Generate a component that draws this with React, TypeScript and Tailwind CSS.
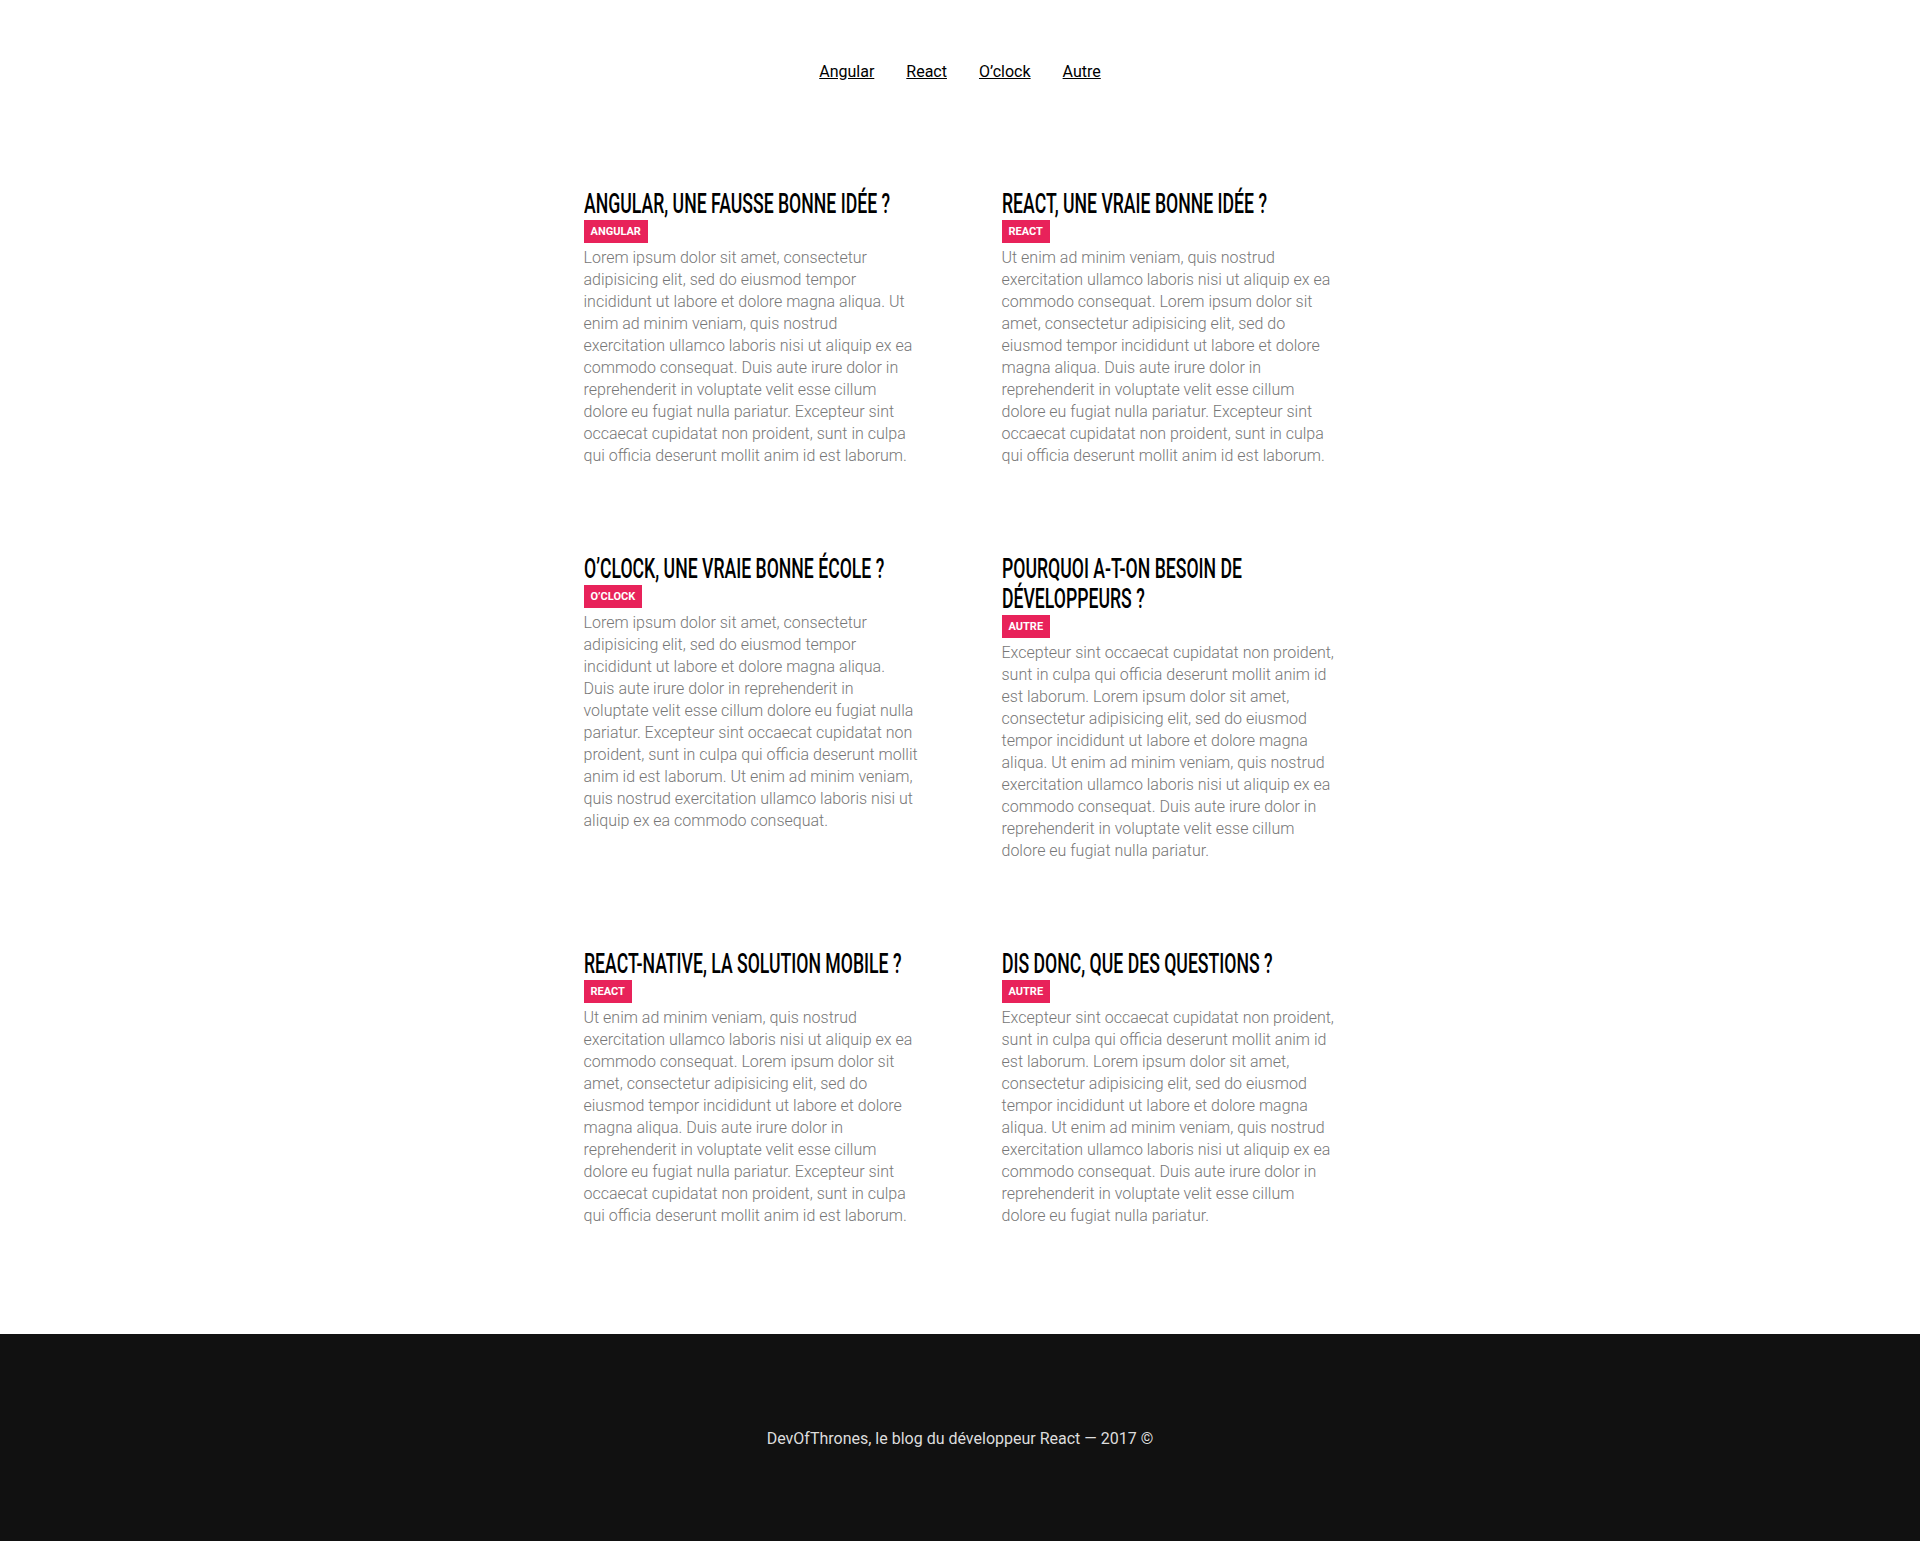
const posts = [
  {
    title: "Angular, une fausse bonne idée ?",
    tag: "Angular",
    text: "Lorem ipsum dolor sit amet, consectetur adipisicing elit, sed do eiusmod tempor incididunt ut labore et dolore magna aliqua. Ut enim ad minim veniam, quis nostrud exercitation ullamco laboris nisi ut aliquip ex ea commodo consequat. Duis aute irure dolor in reprehenderit in voluptate velit esse cillum dolore eu fugiat nulla pariatur. Excepteur sint occaecat cupidatat non proident, sunt in culpa qui officia deserunt mollit anim id est laborum.",
  },
  {
    title: "React, une vraie bonne idée ?",
    tag: "React",
    text: "Ut enim ad minim veniam, quis nostrud exercitation ullamco laboris nisi ut aliquip ex ea commodo consequat. Lorem ipsum dolor sit amet, consectetur adipisicing elit, sed do eiusmod tempor incididunt ut labore et dolore magna aliqua. Duis aute irure dolor in reprehenderit in voluptate velit esse cillum dolore eu fugiat nulla pariatur. Excepteur sint occaecat cupidatat non proident, sunt in culpa qui officia deserunt mollit anim id est laborum.",
  },
  {
    title: "O’clock, une vraie bonne école ?",
    tag: "O’clock",
    text: "Lorem ipsum dolor sit amet, consectetur adipisicing elit, sed do eiusmod tempor incididunt ut labore et dolore magna aliqua. Duis aute irure dolor in reprehenderit in voluptate velit esse cillum dolore eu fugiat nulla pariatur. Excepteur sint occaecat cupidatat non proident, sunt in culpa qui officia deserunt mollit anim id est laborum. Ut enim ad minim veniam, quis nostrud exercitation ullamco laboris nisi ut aliquip ex ea commodo consequat.",
  },
  {
    title: "Pourquoi a-t-on besoin de développeurs ?",
    tag: "Autre",
    text: "Excepteur sint occaecat cupidatat non proident, sunt in culpa qui officia deserunt mollit anim id est laborum. Lorem ipsum dolor sit amet, consectetur adipisicing elit, sed do eiusmod tempor incididunt ut labore et dolore magna aliqua. Ut enim ad minim veniam, quis nostrud exercitation ullamco laboris nisi ut aliquip ex ea commodo consequat. Duis aute irure dolor in reprehenderit in voluptate velit esse cillum dolore eu fugiat nulla pariatur.",
  },
  {
    title: "React-native, la solution mobile ?",
    tag: "React",
    text: "Ut enim ad minim veniam, quis nostrud exercitation ullamco laboris nisi ut aliquip ex ea commodo consequat. Lorem ipsum dolor sit amet, consectetur adipisicing elit, sed do eiusmod tempor incididunt ut labore et dolore magna aliqua. Duis aute irure dolor in reprehenderit in voluptate velit esse cillum dolore eu fugiat nulla pariatur. Excepteur sint occaecat cupidatat non proident, sunt in culpa qui officia deserunt mollit anim id est laborum.",
  },
  {
    title: "Dis donc, que des questions ?",
    tag: "Autre",
    text: "Excepteur sint occaecat cupidatat non proident, sunt in culpa qui officia deserunt mollit anim id est laborum. Lorem ipsum dolor sit amet, consectetur adipisicing elit, sed do eiusmod tempor incididunt ut labore et dolore magna aliqua. Ut enim ad minim veniam, quis nostrud exercitation ullamco laboris nisi ut aliquip ex ea commodo consequat. Duis aute irure dolor in reprehenderit in voluptate velit esse cillum dolore eu fugiat nulla pariatur.",
  },
];

const links = ["Angular", "React", "O’clock", "Autre"];

function Post({ post }: { post: (typeof posts)[0] }) {
  return (
    <article className="mb-[87px]">
      {/* no condensed face installed, so squeeze Roboto horizontally */}
      <h2 className="w-[159%] origin-left scale-x-[0.63] font-['Roboto',sans-serif] text-[28px] font-medium uppercase leading-[30px] text-black">
        {post.title}
      </h2>
      <span className="mt-px block w-fit bg-[#e8225a] px-[7px] py-[5px] text-[11px] font-bold uppercase leading-[13px] text-white">
        {post.tag}
      </span>
      <p className="mt-[4px] text-[16px] font-light leading-[22px] text-[#777]">{post.text}</p>
    </article>
  );
}

export default function App() {
  return (
    <div className="flex min-h-[1541px] flex-col bg-white font-['Roboto',sans-serif]">
      {/* nav */}
      <nav className="flex justify-center gap-8 pt-[61px]">
        {links.map((l) => (
          <a key={l} href="#" className="text-[16px] leading-[22px] text-black underline">
            {l}
          </a>
        ))}
      </nav>
      {/* posts */}
      <main className="mx-auto mt-[106px] grid w-[753px] grid-cols-2 gap-x-[83px] pb-[20px]">
        {posts.map((p) => (
          <Post key={p.title} post={p} />
        ))}
      </main>
      <footer className="mt-auto flex h-[209px] items-center justify-center bg-[#111]">
        <p className="text-[16px] text-[#ddd]">DevOfThrones, le blog du développeur React — 2017 ©</p>
      </footer>
    </div>
  );
}
